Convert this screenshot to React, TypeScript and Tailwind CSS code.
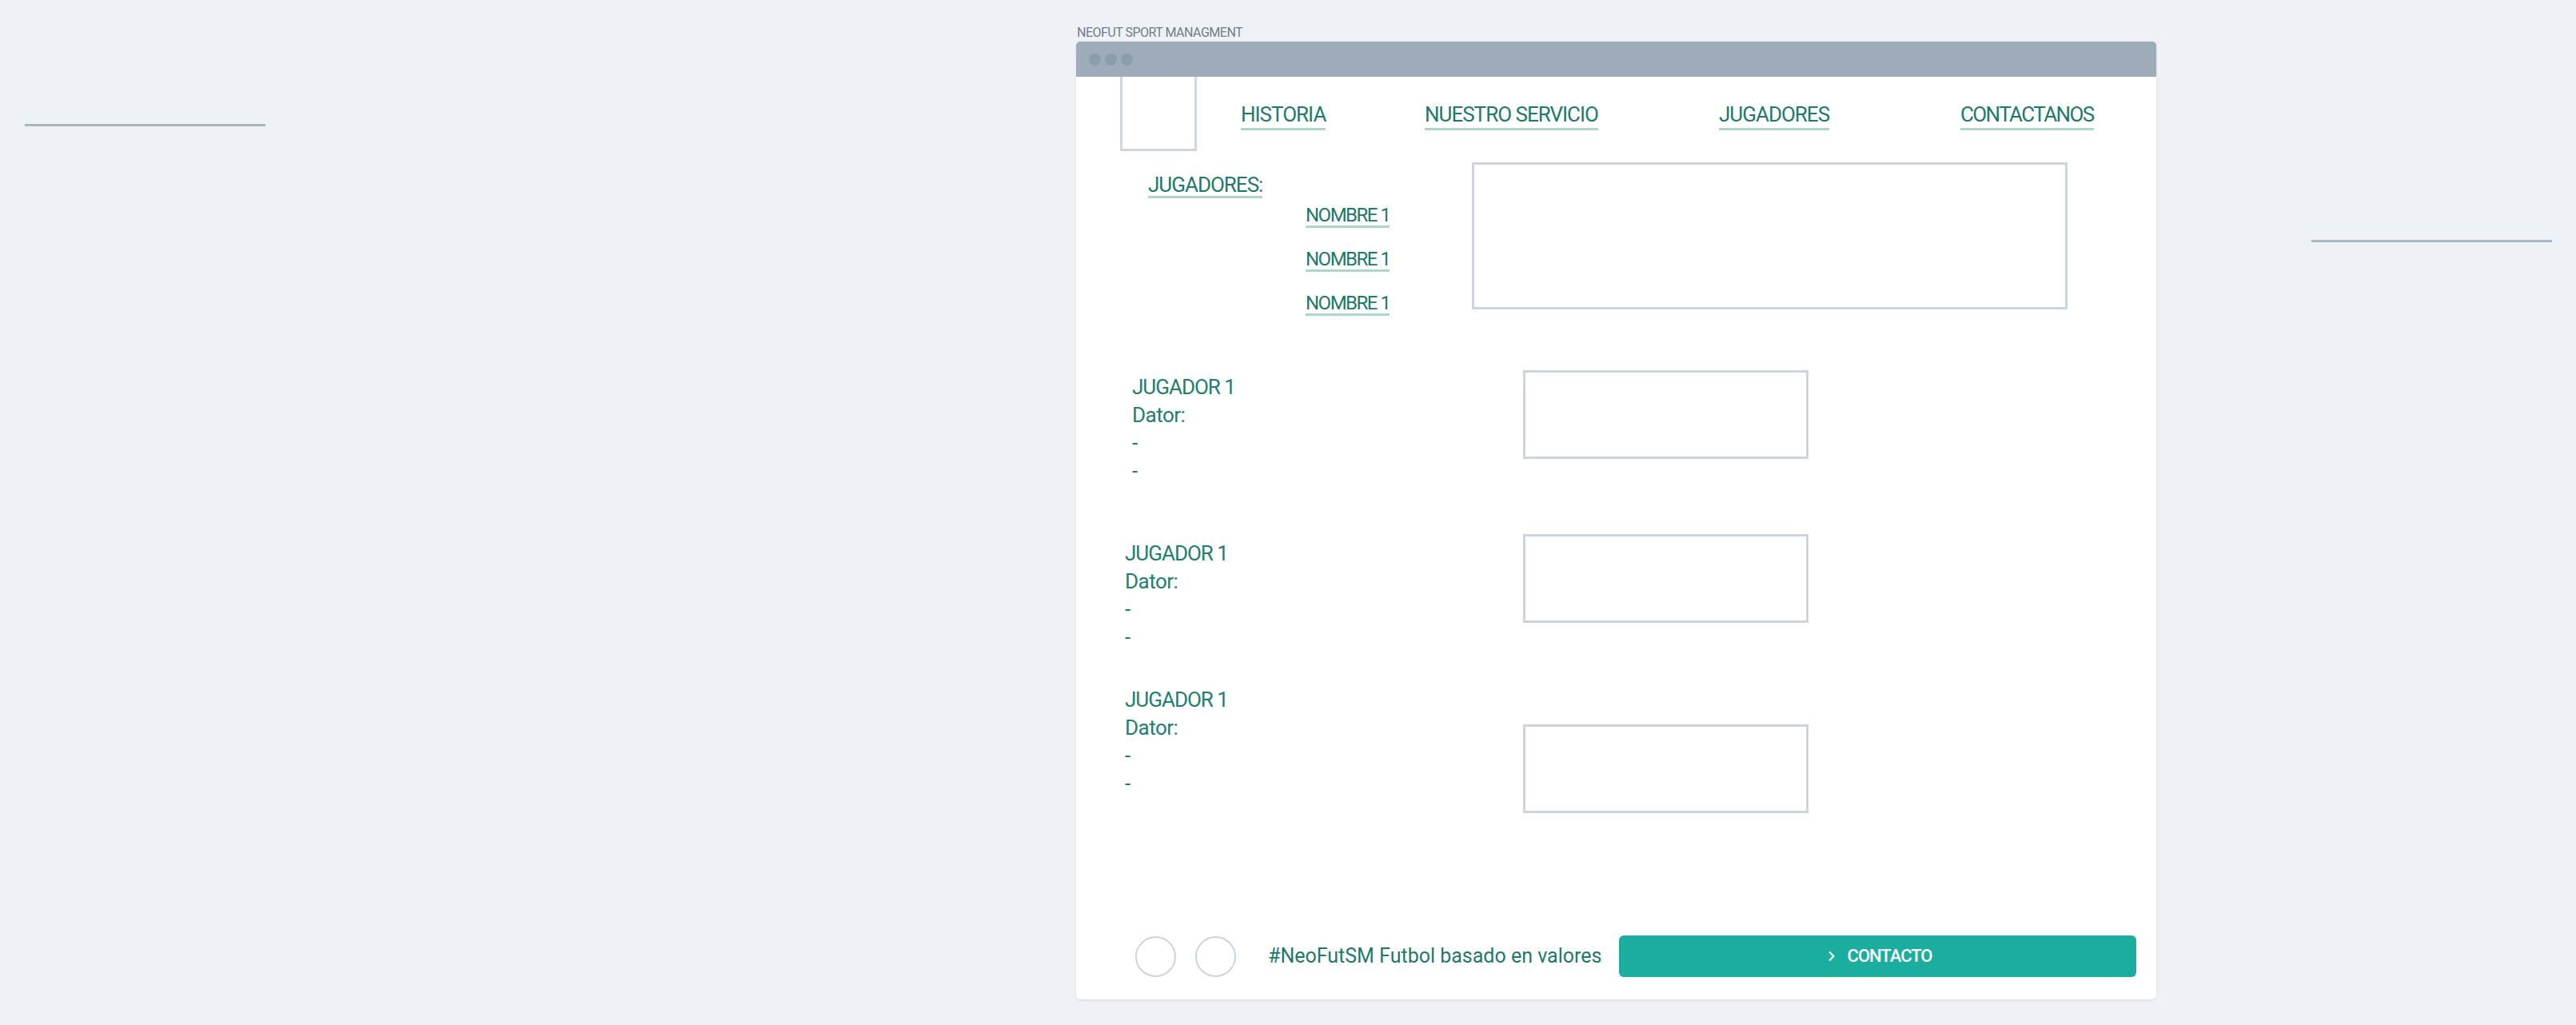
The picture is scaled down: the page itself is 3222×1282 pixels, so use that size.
import { ChevronRight } from "lucide-react"

const navBase = "text-[26px] leading-[26px] text-[#1d7a68] pb-[2px] border-b-[3px] border-[#acd5cb]"

function NameLink({ children }: { children: string }) {
    return (
        <span className="self-start text-[24px] leading-[24px] tracking-[-1.5px] text-[#1d7a68] pb-[1px] border-b-[3px] border-[#acd5cb]">
            {children}
        </span>
    )
}

function PlayerInfo() {
    return (
        <div className="flex flex-col text-[26px] leading-[35px] text-[#21806c]">
            <span className="tracking-[-1px]">JUGADOR 1</span>
            <span className="tracking-[-0.5px]">Dator:</span>
            <span>-</span>
            <span>-</span>
        </div>
    )
}

function Frame({ className }: { className: string }) {
    return <div className={`border-[3px] border-[#cbd5e0] ${className}`}></div>
}

export default function App() {
    return (
        <div className="min-h-screen w-[3222px] h-[1282px] bg-[#eef2f6] flex font-['Roboto',sans-serif]">
            <div className="w-[1346px] pl-[31px] pt-[155px]">
                <div className="w-[301px] h-[3px] bg-[#a9b7c4]"></div>
            </div>

            <div className="w-[1351px] pt-[31px] flex flex-col">
                <div className="h-[20px] leading-[20px] text-[16px] tracking-[-0.5px] text-[#6f7e8c] pl-[1px]">
                    NEOFUT SPORT MANAGMENT
                </div>
                <div className="mt-[1px] h-[1198px] bg-white rounded-[5px] shadow-[0_1px_3px_rgba(100,116,139,0.18)] flex flex-col overflow-hidden">
                    {/* title bar */}
                    <div className="h-[44px] bg-[#9eacb9] flex items-center gap-[5px] pl-[16px]">
                        <div className="w-[15px] h-[15px] rounded-full bg-[#8d9cab]"></div>
                        <div className="w-[15px] h-[15px] rounded-full bg-[#8d9cab]"></div>
                        <div className="w-[15px] h-[15px] rounded-full bg-[#8d9cab]"></div>
                    </div>

                    {/* header */}
                    <div className="flex h-[93px]">
                        <div className="ml-[55px] w-[96px] h-[93px] border-x-[3px] border-b-[3px] border-[#cdd7e1]"></div>
                        <div className="flex pt-[34px] ml-[55px]">
                            <div className="w-[230px]">
                                <span className={`${navBase} tracking-[-1px]`}>HISTORIA</span>
                            </div>
                            <div className="w-[368px]">
                                <span className={`${navBase} tracking-[-1px]`}>NUESTRO SERVICIO</span>
                            </div>
                            <div className="w-[302px]">
                                <span className={`${navBase} tracking-[-1px]`}>JUGADORES</span>
                            </div>
                            <div>
                                <span className={`${navBase} tracking-[-1.6px]`}>CONTACTANOS</span>
                            </div>
                        </div>
                    </div>

                    {/* jugadores list */}
                    <div className="flex pt-[14px]">
                        <div className="w-[495px] pl-[90px] pt-[15px] flex flex-col">
                            <span className="self-start text-[26px] leading-[26px] tracking-[-1px] text-[#1d7a68] pb-[1px] border-b-[3px] border-[#acd5cb]">
                                JUGADORES:
                            </span>
                            <div className="ml-[197px] mt-[9px] flex flex-col gap-[27px]">
                                <NameLink>NOMBRE 1</NameLink>
                                <NameLink>NOMBRE 1</NameLink>
                                <NameLink>NOMBRE 1</NameLink>
                            </div>
                        </div>
                        <Frame className="w-[745px] h-[184px]" />
                    </div>

                    {/* player rows */}
                    <div className="flex items-start mt-[68px]">
                        <div className="w-[559px] pl-[70px] mt-[4px]">
                            <PlayerInfo />
                        </div>
                        <Frame className="w-[357px] h-[111px]" />
                    </div>
                    <div className="flex items-start mt-[61px]">
                        <div className="w-[559px] pl-[61px] mt-[7px]">
                            <PlayerInfo />
                        </div>
                        <Frame className="w-[357px] h-[111px]" />
                    </div>
                    <div className="flex items-start mt-[43px]">
                        <div className="w-[559px] pl-[61px]">
                            <PlayerInfo />
                        </div>
                        <Frame className="w-[357px] h-[111px] mt-[48px]" />
                    </div>

                    {/* footer */}
                    <div className="mt-auto pb-[28px] pl-[74px] pr-[25px] flex items-center">
                        <div className="w-[51px] h-[51px] rounded-full border-2 border-[#cbd5e0]"></div>
                        <div className="ml-[24px] w-[51px] h-[51px] rounded-full border-2 border-[#cbd5e0]"></div>
                        <div className="ml-[40px] w-[439px] text-[25px] leading-[30px] text-[#1d7a68] whitespace-nowrap">
                            #NeoFutSM Futbol basado en valores
                        </div>
                        <button className="flex-1 h-[52px] rounded-[6px] bg-[#1bae9f] flex items-center justify-center gap-[10px] text-white">
                            <ChevronRight size={20} strokeWidth={2.5} />
                            <span className="text-[22px] leading-[24px] tracking-[-1px] font-medium">CONTACTO</span>
                        </button>
                    </div>
                </div>
            </div>

            <div className="pl-[194px] pt-[300px]">
                <div className="w-[301px] h-[3px] bg-[#a9b7c4]"></div>
            </div>
        </div>
    )
}
